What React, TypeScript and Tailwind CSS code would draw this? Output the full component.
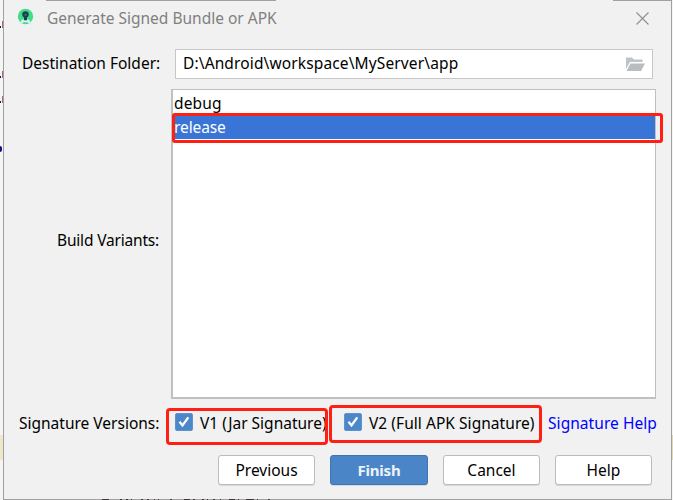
import React from "react";

const inkMarks = [[102, 7], [120, 2], [126, 2], [131, 1], [141, 2], [147, 2], [154, 1], [158, 1], [170, 2], [184, 6], [193, 2], [202, 2], [207, 1], [213, 2], [220, 1], [229, 6], [238, 1], [246, 8], [257, 1], [268, 2]];

const codeLines = [20, 70, 95];

function Check() {
  return (
    <span className="flex h-[18px] w-[18px] shrink-0 items-center justify-center rounded-[2px] border border-[#5f93cd] bg-[#4b87c9]">
      <svg width="16" height="16" viewBox="0 0 16 16" fill="none">
        <path d="M3.500 7.800L6.500 11.400L12.300 3.400" stroke="white" strokeWidth="2.3" />
      </svg>
    </span>
  );
}

function Button({ label, primary = false }: { label: string; primary?: boolean }) {
  return (
    <button
      className={
        primary
          ? "flex h-[30px] w-[98px] items-center justify-center rounded-[3px] border border-[#3f74b4] bg-[#4a86c7] text-[15px] font-bold tracking-[-0.2px] text-[#edf2f8] shadow-[0_1px_0_#d8d8d8]"
          : "flex h-[30px] w-[97px] items-center justify-center rounded-[3px] border border-[#bcbcbc] bg-white pt-px text-[15.5px] text-black shadow-[0_1px_0_#d8d8d8]"
      }
    >
      {label}
    </button>
  );
}

export default function App() {
  return (
    <div className="relative h-[500px] w-[673px] overflow-hidden bg-[#f5f5f5] pl-[3px] font-['Noto_Sans',sans-serif] text-[15.5px] text-black">
      {codeLines.map((top) => (
        <div key={top} className="absolute left-0 h-[9px] w-[4px]" style={{ top }}>
          <i className="absolute left-0 top-[6px] h-[2px] w-px bg-[#10108a]" />
          <i className="absolute left-[2px] top-px h-[7px] w-px bg-[#b66470]" />
        </div>
      ))}
      <i className="absolute left-0 top-[146px] h-[6px] w-[2px] rounded-r-full bg-[#10108a]" />
      <i className="absolute left-0 top-[435px] h-[25px] w-[3px] bg-[#ece7cd]" />
      <i className="absolute right-0 top-[435px] h-[25px] w-px bg-[#ded9bb]" />
      <main className="flex h-[500px] w-[669px] flex-col border-x border-b border-[#a0a0a0] bg-[#f1f1f1]">
        <header className="flex h-[49px] items-start pl-[13px]">
          <svg className="mt-[8px]" width="17" height="18" viewBox="0 0 17 18">
            <circle cx="8.5" cy="8.5" r="7.7" fill="#43dc88" />
            <path d="M5 11.5L1.8 16.5h2.4l2.4-2.2h3.8l2.4 2.2h2.4L12 11.5z" fill="#d6eff0" />
            <path d="M5.2 6.5a3.3 3.3 0 0 1 6.6 0q0 2-1.8 3v2.8H7V9.500q-1.800-1-1.800-3z" fill="#17434f" />
            <circle cx="8.500" cy="6.800" r="1" fill="#3c8480" />
          </svg>
          <h1 className="ml-[13px] w-[232px] whitespace-nowrap pt-[7px] text-[15.5px] leading-[22px] text-[#808080]">Generate Signed Bundle or APK</h1>
          <svg className="ml-[357px] mt-[12px]" width="13" height="13" viewBox="0 0 13 13">
            <path d="M.5.5l12 12m0-12l-12 12" stroke="#929292" strokeWidth="1.2" />
          </svg>
        </header>
        <div className="flex h-[30px] items-center">
          <span className="w-[171px] whitespace-nowrap pl-[18px]">Destination Folder:</span>
          <div className="flex h-[30px] w-[478px] items-center border border-[#c6c6c6] bg-white px-[7px]">
            <span className="flex-1 whitespace-nowrap tracking-[0.13px]">D:\Android\workspace\MyServer\app</span>
            <svg width="20" height="16" viewBox="0 0 20 16">
              <path d="M1 1.500h6l2 2h8.500v2.500H5L1 13z" fill="#bfc4c8" />
              <path d="M5.500 7.500H20l-4 7.500H1.500z" fill="#b7bdc1" />
            </svg>
          </div>
        </div>
        <div className="mt-[10px] flex h-[310px] items-center">
          <span className="w-[167px] whitespace-nowrap pb-[6px] pl-[53px] tracking-[-0.18px]">Build Variants:</span>
          <div className="relative h-[310px] w-[485px] border border-b-2 border-l-2 border-[#c0c0c0] bg-white pt-[2px]">
            <div className="h-[24px] pl-px leading-[22px] tracking-[0.15px]">debug</div>
            <div className="h-[23px] bg-[#3875d7] pl-px leading-[22px] tracking-[-0.1px] text-white">release</div>
            <div className="absolute -left-px top-[23px] h-[30px] w-[491px] rounded-[3px] border-[3px] border-[#ff2015]" />
          </div>
        </div>
        <div className="flex h-[56px] items-start pt-[14px]">
          <span className="w-[170px] whitespace-nowrap pl-[15px] leading-[21px]">Signature Versions:</span>
          <div className="relative flex w-[169px] items-start pl-px">
            <Check />
            <span className="ml-[7px] whitespace-nowrap leading-[21px]">V1 (Jar Signature)</span>
            <div className="absolute -left-[8px] -top-[5px] h-[37px] w-[162px] rounded-[4px] border-[3px] border-[#ff2015]" />
          </div>
          <div className="relative flex w-[205px] items-start pl-px">
            <Check />
            <span className="ml-[7px] whitespace-nowrap leading-[21px] tracking-[0.05px]">V2 (Full APK Signature)</span>
            <div className="absolute -left-[14px] -top-[8px] h-[38px] w-[213px] rounded-[4px] border-[3px] border-[#ff2015]" />
          </div>
          <a className="whitespace-nowrap leading-[21px] tracking-[0.06px] text-[#0000ff]">Signature Help</a>
        </div>
        <footer className="flex gap-[15px] pl-[214px]">
          <Button label="Previous" />
          <Button label="Finish" primary />
          <Button label="Cancel" />
          <Button label="Help" />
        </footer>
      </main>
      <div className="absolute left-[46px] top-0 h-px w-[230px] bg-[#a0a0a0]" />
      <div className="absolute left-[613px] top-0 h-px w-[59px] bg-[#a0a0a0]" />
      {inkMarks.map(([x, w]) => (
        <i key={x} className="absolute top-[499px] h-px bg-[#3d3636]" style={{ left: x, width: w }} />
      ))}
    </div>
  );
}
